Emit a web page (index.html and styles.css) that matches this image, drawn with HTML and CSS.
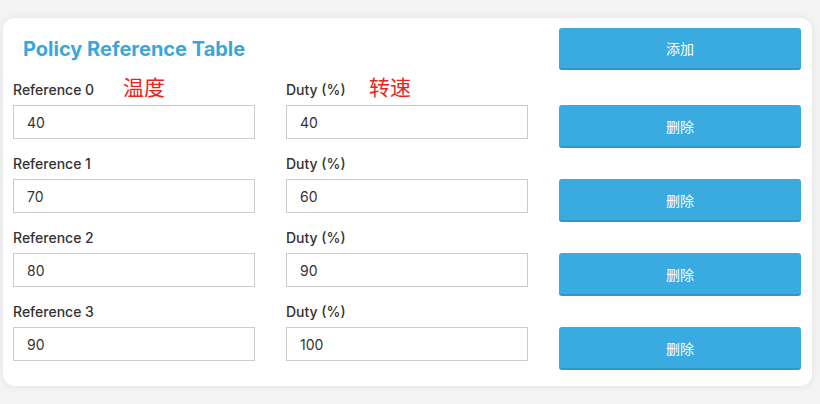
FILE: index.html
```html
<!DOCTYPE html>
<html lang="zh">
<head>
<meta charset="UTF-8">
<meta name="viewport" content="width=device-width, initial-scale=1.0">
<title>Policy Reference Table</title>
<link rel="stylesheet" href="styles.css">
</head>
<body>

<div class="card">

  <div class="header">
    <h2 class="title">Policy Reference Table</h2>
    <button type="button" class="btn">添加</button>
  </div>

  <div class="row">
    <div class="field">
      <label class="label">Reference 0<span class="note note-temp">温度</span></label>
      <input type="text" class="input" value="40">
    </div>
    <div class="field">
      <label class="label">Duty (%)<span class="note note-speed">转速</span></label>
      <input type="text" class="input" value="40">
    </div>
    <div class="action">
      <button type="button" class="btn">删除</button>
    </div>
  </div>

  <div class="row">
    <div class="field">
      <label class="label">Reference 1</label>
      <input type="text" class="input" value="70">
    </div>
    <div class="field">
      <label class="label">Duty (%)</label>
      <input type="text" class="input" value="60">
    </div>
    <div class="action">
      <button type="button" class="btn">删除</button>
    </div>
  </div>

  <div class="row">
    <div class="field">
      <label class="label">Reference 2</label>
      <input type="text" class="input" value="80">
    </div>
    <div class="field">
      <label class="label">Duty (%)</label>
      <input type="text" class="input" value="90">
    </div>
    <div class="action">
      <button type="button" class="btn">删除</button>
    </div>
  </div>

  <div class="row">
    <div class="field">
      <label class="label">Reference 3</label>
      <input type="text" class="input" value="90">
    </div>
    <div class="field">
      <label class="label">Duty (%)</label>
      <input type="text" class="input" value="100">
    </div>
    <div class="action">
      <button type="button" class="btn">删除</button>
    </div>
  </div>

</div>

</body>
</html>
```

FILE: styles.css
```css
body {
  font-family: Inter, "Noto Sans CJK SC", sans-serif;
  margin: 0;
  padding: 18px 8px 18px 3px;
  background-color: #f4f4f4;
  color: #333;
}
.card {
  background-color: #fff;
  border-radius: 12px;
  box-shadow: 0 0 10px rgba(0, 0, 0, 0.08);
  padding: 10px 11px 16px 10px;
}
.header,
.row {
  display: grid;
  grid-template-columns: 242px 242px 242px;
  column-gap: 31px;
}
.header {
  margin-bottom: 11px;
}
.row {
  margin-bottom: 7px;
}
.row:last-child {
  margin-bottom: 0;
}
.title {
  grid-column: 1 / 3;
  align-self: center;
  margin: 0;
  padding-left: 10px;
  font-size: 20px;
  font-weight: 700;
  color: #3ba6da;
}
.field {
  display: flex;
  flex-direction: column;
}
.label {
  position: relative;
  height: 18px;
  line-height: 18px;
  margin-bottom: 6px;
  font-size: 14px;
  font-weight: 500;
  color: #333;
}
.note {
  position: absolute;
  top: -7px;
  font-family: "Noto Sans CJK SC", sans-serif;
  font-size: 21px;
  font-weight: 400;
  line-height: 24px;
  color: #e8241c;
}
.note-temp {
  left: 110px;
}
.note-speed {
  left: 83px;
}
.input {
  box-sizing: border-box;
  height: 34px;
  padding: 0 13px;
  border: 1px solid #ccc;
  border-radius: 0;
  font-family: Inter, sans-serif;
  font-size: 14px;
  color: #333;
  outline: none;
}
.action {
  padding-top: 24px;
}
.btn {
  display: block;
  box-sizing: border-box;
  width: 100%;
  height: 43px;
  border: none;
  border-bottom: 2px solid #3495c9;
  border-radius: 3px;
  background-color: #3aabe1;
  color: #fff;
  font-family: "Noto Sans CJK SC", sans-serif;
  font-size: 14px;
  cursor: pointer;
}
.header .btn {
  height: 42px;
}
```
